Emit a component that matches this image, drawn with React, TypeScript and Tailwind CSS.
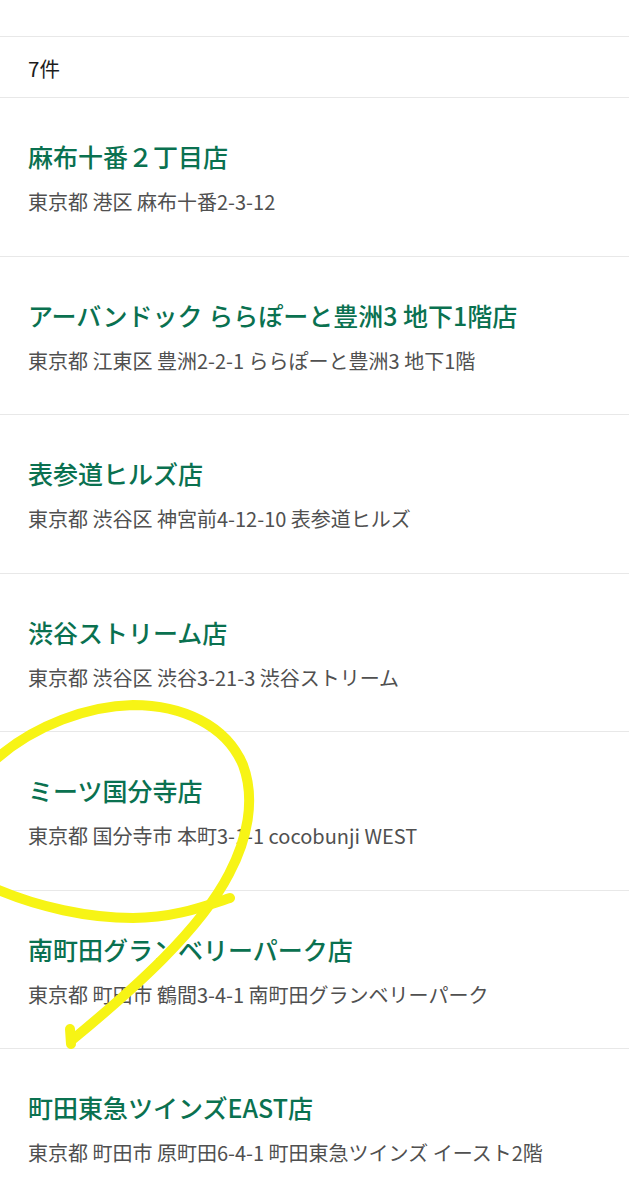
const stores = [
  { name: "麻布十番２丁目店", address: "東京都 港区 麻布十番2-3-12" },
  { name: "アーバンドック ららぽーと豊洲3 地下1階店", address: "東京都 江東区 豊洲2-2-1 ららぽーと豊洲3 地下1階" },
  { name: "表参道ヒルズ店", address: "東京都 渋谷区 神宮前4-12-10 表参道ヒルズ" },
  { name: "渋谷ストリーム店", address: "東京都 渋谷区 渋谷3-21-3 渋谷ストリーム" },
  { name: "ミーツ国分寺店", address: "東京都 国分寺市 本町3-1-1 cocobunji WEST" },
  { name: "南町田グランベリーパーク店", address: "東京都 町田市 鶴間3-4-1 南町田グランベリーパーク" },
  { name: "町田東急ツインズEAST店", address: "東京都 町田市 原町田6-4-1 町田東急ツインズ イースト2階" },
];

function Scribble() {
  // hand-drawn marker loop over the 5th store
  return (
    <svg
      className="pointer-events-none absolute left-0 top-0"
      width="629"
      height="1200"
      viewBox="0 0 629 1200"
      fill="none"
    >
      <g stroke="#f7f415" strokeWidth="10" strokeLinecap="round" strokeLinejoin="round">
        <path d="M -4 759 C 35 725 88 706 133 705 C 182 705 226 725 243 765 C 256 800 247 840 229 874 C 200 930 135 988 72 1040" />
        <path d="M 70 1029 L 71 1044" />
        <path d="M -4 889 C 38 907 88 918 133 918 C 175 918 205 906 230 898" />
      </g>
    </svg>
  );
}

export default function App() {
  return (
    <div
      className="relative min-h-[1200px] w-[629px] overflow-hidden bg-white"
      style={{ fontFamily: '"Noto Sans CJK JP", "Noto Sans", sans-serif' }}
    >
      <div className="h-[37px] border-b border-[#e8e8e8]" />

      {/* Result count */}
      <div className="flex h-[61px] items-center border-b border-[#e8e8e8] px-[28px] pt-[2px] text-[20.5px] text-[#1c1c1c]">
        7件
      </div>

      {/* Store list */}
      <ul>
        {stores.map((s) => (
          <li key={s.name} className="h-[158.5px] border-b border-[#e8e8e8] px-[28px] pt-[41px]">
            <div className="text-[25px] font-medium leading-[34px] text-[#0a7150]">{s.name}</div>
            <div className="mt-[15px] text-[20px] leading-[28px] text-[#505050]">{s.address}</div>
          </li>
        ))}
      </ul>

      <Scribble />
    </div>
  );
}
